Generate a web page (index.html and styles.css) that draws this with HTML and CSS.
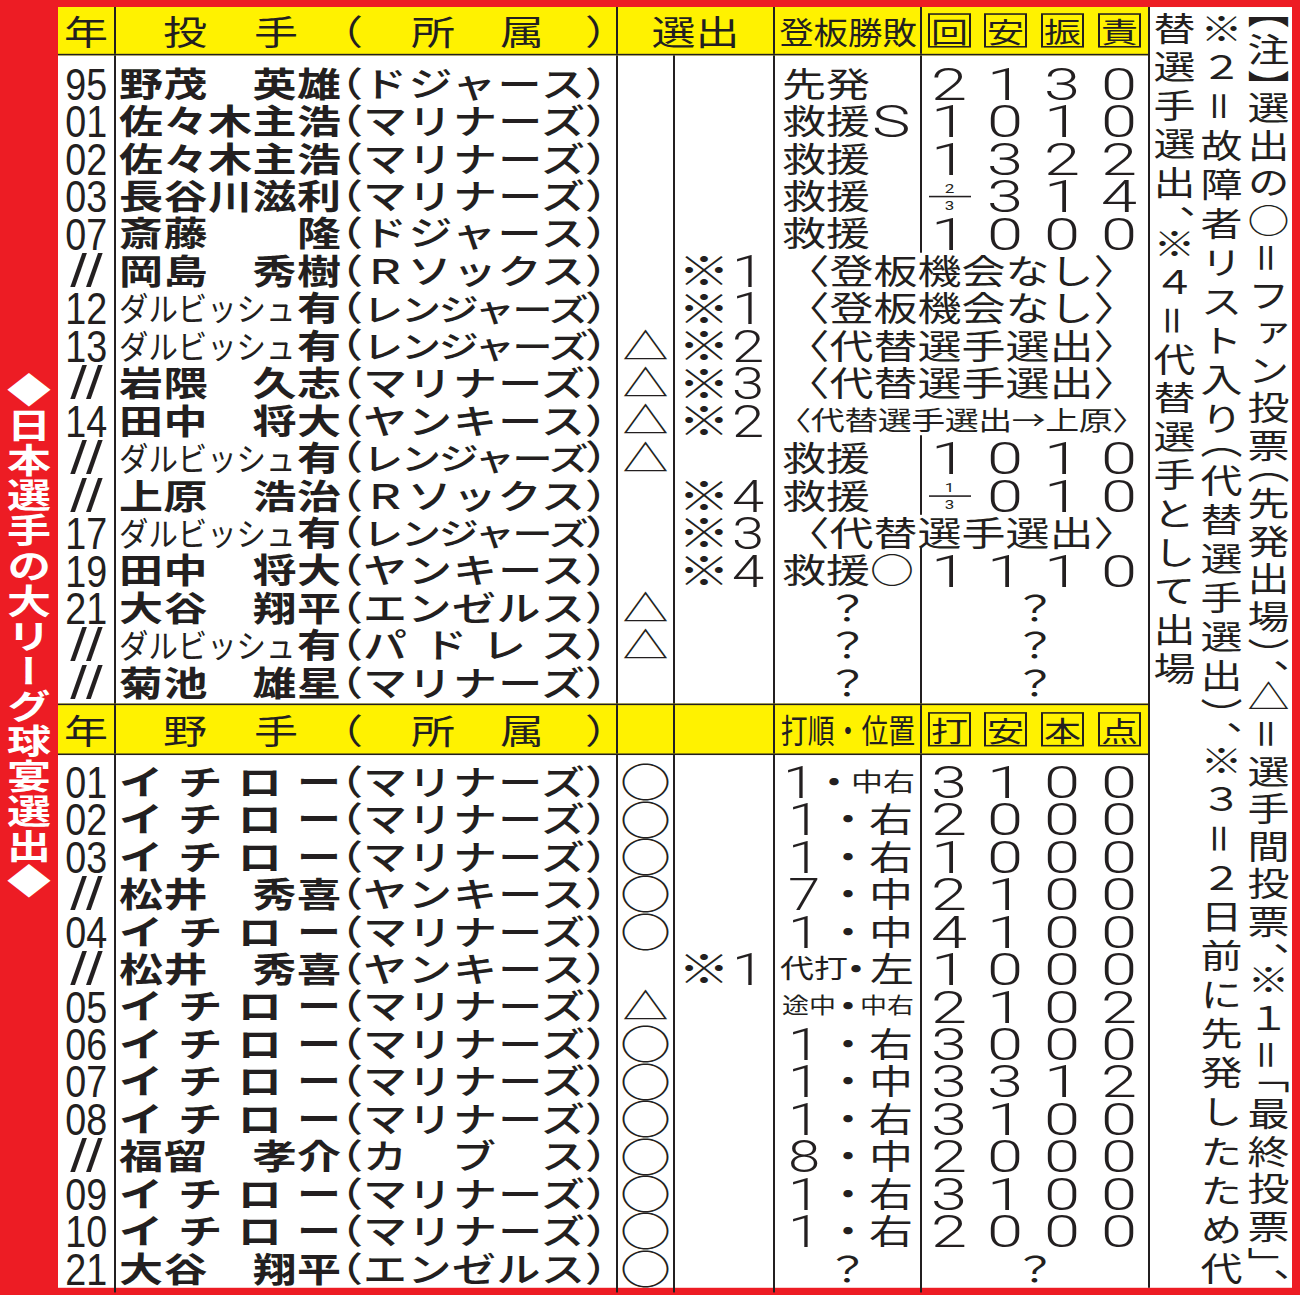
FILE: index.html
```html
<!DOCTYPE html>
<html lang="ja">
<head>
<meta charset="utf-8">
<title>日本選手の大リーグ球宴選出</title>
<link rel="stylesheet" href="styles.css">
</head>
<body>
<div class="frame">
<div class="page">
  <div class="strip"><div class="strip-t">◆日本選手の大リーグ球宴選出◆</div></div>
  <div class="tbl">
    <div class="row hdr">
      <div class="c y">年</div>
      <div class="c n"><span class="nm hn">投手</span><span class="tm"><span class="p">（</span><span class="ti hi">所属</span><span class="p">）</span></span></div>
      <div class="c sel">選出</div>
      <div class="c hc"><span class="hd1">登板勝敗</span></div>
      <div class="c s s1"><span class="bx">回</span></div>
      <div class="c s"><span class="bx">安</span></div>
      <div class="c s"><span class="bx">振</span></div>
      <div class="c s"><span class="bx">責</span></div>
    </div>
    <div class="body b1">
      <div class="row pt7">
        <div class="c y"><span class="yr">95</span></div>
        <div class="c n"><span class="nm">野茂　英雄</span><span class="tm"><span class="p">（</span><span class="ti">ドジャース</span><span class="p">）</span></span></div>
        <div class="c e1"></div><div class="c e2"></div>
        <div class="c t">先発</div>
        <div class="c s s1"><span class="g">2</span></div><div class="c s"><span class="g">1</span></div><div class="c s"><span class="g">3</span></div><div class="c s"><span class="g">0</span></div>
      </div>
      <div class="row">
        <div class="c y"><span class="yr">01</span></div>
        <div class="c n"><span class="nm">佐々木主浩</span><span class="tm"><span class="p">（</span><span class="ti">マリナーズ</span><span class="p">）</span></span></div>
        <div class="c e1"></div><div class="c e2"></div>
        <div class="c t">救援<span class="sv">S</span></div>
        <div class="c s s1"><span class="g">1</span></div><div class="c s"><span class="g">0</span></div><div class="c s"><span class="g">1</span></div><div class="c s"><span class="g">0</span></div>
      </div>
      <div class="row">
        <div class="c y"><span class="yr">02</span></div>
        <div class="c n"><span class="nm">佐々木主浩</span><span class="tm"><span class="p">（</span><span class="ti">マリナーズ</span><span class="p">）</span></span></div>
        <div class="c e1"></div><div class="c e2"></div>
        <div class="c t">救援</div>
        <div class="c s s1"><span class="g">1</span></div><div class="c s"><span class="g">3</span></div><div class="c s"><span class="g">2</span></div><div class="c s"><span class="g">2</span></div>
      </div>
      <div class="row">
        <div class="c y"><span class="yr">03</span></div>
        <div class="c n"><span class="nm">長谷川滋利</span><span class="tm"><span class="p">（</span><span class="ti">マリナーズ</span><span class="p">）</span></span></div>
        <div class="c e1"></div><div class="c e2"></div>
        <div class="c t">救援</div>
        <div class="c s s1"><span class="fr"><b>2</b><i></i><b>3</b></span></div><div class="c s"><span class="g">3</span></div><div class="c s"><span class="g">1</span></div><div class="c s"><span class="g">4</span></div>
      </div>
      <div class="row">
        <div class="c y"><span class="yr">07</span></div>
        <div class="c n"><span class="nm">斎藤　　隆</span><span class="tm"><span class="p">（</span><span class="ti">ドジャース</span><span class="p">）</span></span></div>
        <div class="c e1"></div><div class="c e2"></div>
        <div class="c t">救援</div>
        <div class="c s s1"><span class="g">1</span></div><div class="c s"><span class="g">0</span></div><div class="c s"><span class="g">0</span></div><div class="c s"><span class="g">0</span></div>
      </div>
      <div class="row">
        <div class="c y"><span class="dit">//</span></div>
        <div class="c n"><span class="nm">岡島　秀樹</span><span class="tm"><span class="p">（</span><span class="ti">Ｒソックス</span><span class="p">）</span></span></div>
        <div class="c e1"></div><div class="c e2"><span class="k">※</span><span class="g2">1</span></div>
        <div class="c w">〈登板機会なし〉</div>
      </div>
      <div class="row">
        <div class="c y"><span class="yr">12</span></div>
        <div class="c n"><span class="nm"><span class="dv">ダルビッシュ</span>有</span><span class="tm"><span class="p">（</span><span class="ti"><span class="ren">レンジャーズ</span></span><span class="p">）</span></span></div>
        <div class="c e1"></div><div class="c e2"><span class="k">※</span><span class="g2">1</span></div>
        <div class="c w">〈登板機会なし〉</div>
      </div>
      <div class="row">
        <div class="c y"><span class="yr">13</span></div>
        <div class="c n"><span class="nm"><span class="dv">ダルビッシュ</span>有</span><span class="tm"><span class="p">（</span><span class="ti"><span class="ren">レンジャーズ</span></span><span class="p">）</span></span></div>
        <div class="c e1">△</div><div class="c e2"><span class="k">※</span><span class="g2">2</span></div>
        <div class="c w">〈代替選手選出〉</div>
      </div>
      <div class="row">
        <div class="c y"><span class="dit">//</span></div>
        <div class="c n"><span class="nm">岩隈　久志</span><span class="tm"><span class="p">（</span><span class="ti">マリナーズ</span><span class="p">）</span></span></div>
        <div class="c e1">△</div><div class="c e2"><span class="k">※</span><span class="g2">3</span></div>
        <div class="c w">〈代替選手選出〉</div>
      </div>
      <div class="row">
        <div class="c y"><span class="yr">14</span></div>
        <div class="c n"><span class="nm">田中　将大</span><span class="tm"><span class="p">（</span><span class="ti">ヤンキース</span><span class="p">）</span></span></div>
        <div class="c e1">△</div><div class="c e2"><span class="k">※</span><span class="g2">2</span></div>
        <div class="c w sm">〈代替選手選出→上原〉</div>
      </div>
      <div class="row">
        <div class="c y"><span class="dit">//</span></div>
        <div class="c n"><span class="nm"><span class="dv">ダルビッシュ</span>有</span><span class="tm"><span class="p">（</span><span class="ti"><span class="ren">レンジャーズ</span></span><span class="p">）</span></span></div>
        <div class="c e1">△</div><div class="c e2"></div>
        <div class="c t">救援</div>
        <div class="c s s1"><span class="g">1</span></div><div class="c s"><span class="g">0</span></div><div class="c s"><span class="g">1</span></div><div class="c s"><span class="g">0</span></div>
      </div>
      <div class="row">
        <div class="c y"><span class="dit">//</span></div>
        <div class="c n"><span class="nm">上原　浩治</span><span class="tm"><span class="p">（</span><span class="ti">Ｒソックス</span><span class="p">）</span></span></div>
        <div class="c e1"></div><div class="c e2"><span class="k">※</span><span class="g2">4</span></div>
        <div class="c t">救援</div>
        <div class="c s s1"><span class="fr"><b>1</b><i></i><b>3</b></span></div><div class="c s"><span class="g">0</span></div><div class="c s"><span class="g">1</span></div><div class="c s"><span class="g">0</span></div>
      </div>
      <div class="row">
        <div class="c y"><span class="yr">17</span></div>
        <div class="c n"><span class="nm"><span class="dv">ダルビッシュ</span>有</span><span class="tm"><span class="p">（</span><span class="ti"><span class="ren">レンジャーズ</span></span><span class="p">）</span></span></div>
        <div class="c e1"></div><div class="c e2"><span class="k">※</span><span class="g2">3</span></div>
        <div class="c w">〈代替選手選出〉</div>
      </div>
      <div class="row">
        <div class="c y"><span class="yr">19</span></div>
        <div class="c n"><span class="nm">田中　将大</span><span class="tm"><span class="p">（</span><span class="ti">ヤンキース</span><span class="p">）</span></span></div>
        <div class="c e1"></div><div class="c e2"><span class="k">※</span><span class="g2">4</span></div>
        <div class="c t">救援○</div>
        <div class="c s s1"><span class="g">1</span></div><div class="c s"><span class="g">1</span></div><div class="c s"><span class="g">1</span></div><div class="c s"><span class="g">0</span></div>
      </div>
      <div class="row">
        <div class="c y"><span class="yr">21</span></div>
        <div class="c n"><span class="nm">大谷　翔平</span><span class="tm"><span class="p">（</span><span class="ti">エンゼルス</span><span class="p">）</span></span></div>
        <div class="c e1">△</div><div class="c e2"></div>
        <div class="c dq">？</div>
        <div class="c q4">？</div>
      </div>
      <div class="row">
        <div class="c y"><span class="dit">//</span></div>
        <div class="c n"><span class="nm"><span class="dv">ダルビッシュ</span>有</span><span class="tm"><span class="p">（</span><span class="ti">パドレス</span><span class="p">）</span></span></div>
        <div class="c e1">△</div><div class="c e2"></div>
        <div class="c dq">？</div>
        <div class="c q4">？</div>
      </div>
      <div class="row pb8">
        <div class="c y"><span class="dit">//</span></div>
        <div class="c n"><span class="nm">菊池　雄星</span><span class="tm"><span class="p">（</span><span class="ti">マリナーズ</span><span class="p">）</span></span></div>
        <div class="c e1"></div><div class="c e2"></div>
        <div class="c dq">？</div>
        <div class="c q4">？</div>
      </div>
    </div>
    <div class="row hdr h2">
      <div class="c y">年</div>
      <div class="c n"><span class="nm hn">野手</span><span class="tm"><span class="p">（</span><span class="ti hi">所属</span><span class="p">）</span></span></div>
      <div class="c e1"></div><div class="c e2"></div>
      <div class="c hc"><span class="hd2">打順・位置</span></div>
      <div class="c s s1"><span class="bx">打</span></div>
      <div class="c s"><span class="bx">安</span></div>
      <div class="c s"><span class="bx">本</span></div>
      <div class="c s"><span class="bx">点</span></div>
    </div>
    <div class="body b2">
      <div class="row pt5">
        <div class="c y"><span class="yr">01</span></div>
        <div class="c n"><span class="nm">イチロー</span><span class="tm"><span class="p">（</span><span class="ti">マリナーズ</span><span class="p">）</span></span></div>
        <div class="c e1 ci">○</div><div class="c e2"></div>
        <div class="c d"><span class="o o1">1</span><span class="dt dt1">・</span><span class="ps ps1">中右</span></div>
        <div class="c s s1"><span class="g">3</span></div><div class="c s"><span class="g">1</span></div><div class="c s"><span class="g">0</span></div><div class="c s"><span class="g">0</span></div>
      </div>
      <div class="row">
        <div class="c y"><span class="yr">02</span></div>
        <div class="c n"><span class="nm">イチロー</span><span class="tm"><span class="p">（</span><span class="ti">マリナーズ</span><span class="p">）</span></span></div>
        <div class="c e1 ci">○</div><div class="c e2"></div>
        <div class="c d"><span class="o">1</span><span class="dt">・</span><span class="ps">右</span></div>
        <div class="c s s1"><span class="g">2</span></div><div class="c s"><span class="g">0</span></div><div class="c s"><span class="g">0</span></div><div class="c s"><span class="g">0</span></div>
      </div>
      <div class="row">
        <div class="c y"><span class="yr">03</span></div>
        <div class="c n"><span class="nm">イチロー</span><span class="tm"><span class="p">（</span><span class="ti">マリナーズ</span><span class="p">）</span></span></div>
        <div class="c e1 ci">○</div><div class="c e2"></div>
        <div class="c d"><span class="o">1</span><span class="dt">・</span><span class="ps">右</span></div>
        <div class="c s s1"><span class="g">1</span></div><div class="c s"><span class="g">0</span></div><div class="c s"><span class="g">0</span></div><div class="c s"><span class="g">0</span></div>
      </div>
      <div class="row">
        <div class="c y"><span class="dit">//</span></div>
        <div class="c n"><span class="nm">松井　秀喜</span><span class="tm"><span class="p">（</span><span class="ti">ヤンキース</span><span class="p">）</span></span></div>
        <div class="c e1 ci">○</div><div class="c e2"></div>
        <div class="c d"><span class="o">7</span><span class="dt">・</span><span class="ps">中</span></div>
        <div class="c s s1"><span class="g">2</span></div><div class="c s"><span class="g">1</span></div><div class="c s"><span class="g">0</span></div><div class="c s"><span class="g">0</span></div>
      </div>
      <div class="row">
        <div class="c y"><span class="yr">04</span></div>
        <div class="c n"><span class="nm">イチロー</span><span class="tm"><span class="p">（</span><span class="ti">マリナーズ</span><span class="p">）</span></span></div>
        <div class="c e1 ci">○</div><div class="c e2"></div>
        <div class="c d"><span class="o">1</span><span class="dt">・</span><span class="ps">中</span></div>
        <div class="c s s1"><span class="g">4</span></div><div class="c s"><span class="g">1</span></div><div class="c s"><span class="g">0</span></div><div class="c s"><span class="g">0</span></div>
      </div>
      <div class="row">
        <div class="c y"><span class="dit">//</span></div>
        <div class="c n"><span class="nm">松井　秀喜</span><span class="tm"><span class="p">（</span><span class="ti">ヤンキース</span><span class="p">）</span></span></div>
        <div class="c e1"></div><div class="c e2"><span class="k">※</span><span class="g2">1</span></div>
        <div class="c d"><span class="sm1">代打</span><span class="dt dt3">・</span><span class="ps">左</span></div>
        <div class="c s s1"><span class="g">1</span></div><div class="c s"><span class="g">0</span></div><div class="c s"><span class="g">0</span></div><div class="c s"><span class="g">0</span></div>
      </div>
      <div class="row">
        <div class="c y"><span class="yr">05</span></div>
        <div class="c n"><span class="nm">イチロー</span><span class="tm"><span class="p">（</span><span class="ti">マリナーズ</span><span class="p">）</span></span></div>
        <div class="c e1">△</div><div class="c e2"></div>
        <div class="c d"><span class="sm2 f">途中</span><span class="dt dt4">・</span><span class="sm2">中右</span></div>
        <div class="c s s1"><span class="g">2</span></div><div class="c s"><span class="g">1</span></div><div class="c s"><span class="g">0</span></div><div class="c s"><span class="g">2</span></div>
      </div>
      <div class="row">
        <div class="c y"><span class="yr">06</span></div>
        <div class="c n"><span class="nm">イチロー</span><span class="tm"><span class="p">（</span><span class="ti">マリナーズ</span><span class="p">）</span></span></div>
        <div class="c e1 ci">○</div><div class="c e2"></div>
        <div class="c d"><span class="o">1</span><span class="dt">・</span><span class="ps">右</span></div>
        <div class="c s s1"><span class="g">3</span></div><div class="c s"><span class="g">0</span></div><div class="c s"><span class="g">0</span></div><div class="c s"><span class="g">0</span></div>
      </div>
      <div class="row">
        <div class="c y"><span class="yr">07</span></div>
        <div class="c n"><span class="nm">イチロー</span><span class="tm"><span class="p">（</span><span class="ti">マリナーズ</span><span class="p">）</span></span></div>
        <div class="c e1 ci">○</div><div class="c e2"></div>
        <div class="c d"><span class="o">1</span><span class="dt">・</span><span class="ps">中</span></div>
        <div class="c s s1"><span class="g">3</span></div><div class="c s"><span class="g">3</span></div><div class="c s"><span class="g">1</span></div><div class="c s"><span class="g">2</span></div>
      </div>
      <div class="row">
        <div class="c y"><span class="yr">08</span></div>
        <div class="c n"><span class="nm">イチロー</span><span class="tm"><span class="p">（</span><span class="ti">マリナーズ</span><span class="p">）</span></span></div>
        <div class="c e1 ci">○</div><div class="c e2"></div>
        <div class="c d"><span class="o">1</span><span class="dt">・</span><span class="ps">右</span></div>
        <div class="c s s1"><span class="g">3</span></div><div class="c s"><span class="g">1</span></div><div class="c s"><span class="g">0</span></div><div class="c s"><span class="g">0</span></div>
      </div>
      <div class="row">
        <div class="c y"><span class="dit">//</span></div>
        <div class="c n"><span class="nm">福留　孝介</span><span class="tm"><span class="p">（</span><span class="ti">カブス</span><span class="p">）</span></span></div>
        <div class="c e1 ci">○</div><div class="c e2"></div>
        <div class="c d"><span class="o">8</span><span class="dt">・</span><span class="ps">中</span></div>
        <div class="c s s1"><span class="g">2</span></div><div class="c s"><span class="g">0</span></div><div class="c s"><span class="g">0</span></div><div class="c s"><span class="g">0</span></div>
      </div>
      <div class="row">
        <div class="c y"><span class="yr">09</span></div>
        <div class="c n"><span class="nm">イチロー</span><span class="tm"><span class="p">（</span><span class="ti">マリナーズ</span><span class="p">）</span></span></div>
        <div class="c e1 ci">○</div><div class="c e2"></div>
        <div class="c d"><span class="o">1</span><span class="dt">・</span><span class="ps">右</span></div>
        <div class="c s s1"><span class="g">3</span></div><div class="c s"><span class="g">1</span></div><div class="c s"><span class="g">0</span></div><div class="c s"><span class="g">0</span></div>
      </div>
      <div class="row">
        <div class="c y"><span class="yr">10</span></div>
        <div class="c n"><span class="nm">イチロー</span><span class="tm"><span class="p">（</span><span class="ti">マリナーズ</span><span class="p">）</span></span></div>
        <div class="c e1 ci">○</div><div class="c e2"></div>
        <div class="c d"><span class="o">1</span><span class="dt">・</span><span class="ps">右</span></div>
        <div class="c s s1"><span class="g">2</span></div><div class="c s"><span class="g">0</span></div><div class="c s"><span class="g">0</span></div><div class="c s"><span class="g">0</span></div>
      </div>
      <div class="row pb6">
        <div class="c y"><span class="yr">21</span></div>
        <div class="c n"><span class="nm">大谷　翔平</span><span class="tm"><span class="p">（</span><span class="ti">エンゼルス</span><span class="p">）</span></span></div>
        <div class="c e1 ci">○</div><div class="c e2"></div>
        <div class="c dq">？</div>
        <div class="c q4">？</div>
      </div>
    </div>
  </div>
  <div class="notes">
    <div class="nl j"><span class="h">【</span>注<span class="h">】</span>選出の○<span class="h">＝</span>ファン投票<span class="h">（</span>先発出場<span class="h">）、</span>△<span class="h">＝</span>選手間投票<span class="h">、</span>※１<span class="h">＝「</span>最終投票<span class="h">」、</span></div>
    <div class="nl j">※２<span class="h">＝</span>故障者リスト入り<span class="h">（</span>代替選手選出<span class="h">）、</span>※３<span class="h">＝</span>２日前に先発したため代</div>
    <div class="nl l3">替選手選出<span class="h">、</span>※４<span class="h">＝</span>代替選手として出場</div>
  </div>
</div>
</div>
</body>
</html>
```

FILE: styles.css
```css
* { box-sizing: border-box; }
html, body { margin: 0; padding: 0; background: #ed1c24; overflow: hidden; }
body { width: 1300px; height: 1295px; }

.frame { width: 1300px; height: 1295px; overflow: hidden; }

.page {
  width: 1300px;
  height: 1660px;
  padding: 9px 8px 9px 0;
  display: flex;
  transform: scaleY(0.78);
  transform-origin: 0 0;
  background: #ed1c24;
  color: #231f20;
  font-family: "Noto Sans CJK JP", "Noto Sans CJK SC", sans-serif;
}

/* left red strip */
.strip { flex: 0 0 58px; display: flex; align-items: center; justify-content: center; padding-bottom: 30px; }
.strip-t { writing-mode: vertical-rl; color: #fff; font-weight: 700; font-size: 44px; line-height: 50px; letter-spacing: 1px; white-space: nowrap; }

/* main table */
.tbl { flex: 0 0 1090px; background: #fff; display: flex; flex-direction: column; }
.body { flex: none; }
.b1 { height: 831px; }
.b2 { height: 683px; }

.row {
  display: grid;
  grid-template-columns: 56px 502px 57px 100px 147px 57px 57px 57px 57px;
  height: 48px;
  font-size: 44px;
  line-height: 48px;
}
.hdr { height: 62px; background: #fff200; border-bottom: 2px solid #231f20; }
.h2 { height: 66px; border-top: 2px solid #231f20; }
.pt7 { height: 55px; }
.pt7 > .c { padding-top: 7px; }
.pb8 { height: 56px; }
.pb8 > .c { padding-bottom: 8px; }
.pt5 { height: 53px; }
.pt5 > .c { padding-top: 5px; }
.pb6 { height: 54px; }
.pb6 > .c { padding-bottom: 6px; }

.c { display: flex; align-items: center; border-left: 2px solid #231f20; white-space: nowrap; min-width: 0; }
.y { border-left: 0; justify-content: center; }
.n { padding-left: 3px; }
.nm { flex: 0 0 222px; white-space: normal; text-align: justify; text-align-last: justify; font-weight: 700; }
.hdr .nm { font-weight: 400; }
.hn { padding: 0 43px 0 44px; }
.tm { display: flex; flex: 0 0 266px; font-weight: 500; }
.hdr .tm { font-weight: 400; }
.p { flex: none; font-feature-settings: "halt"; }
.ti { flex: 0 0 222px; white-space: normal; text-align: justify; text-align-last: justify; }
.hi { padding: 0 41px 0 48px; }
.dv {
  display: inline-block;
  white-space: nowrap;
  font-weight: 400;
  font-size: 42px;
  transform: scaleX(0.7);
  transform-origin: 0 50%;
  margin-right: -76px;
}
.ren { font-size: 40px; letter-spacing: -3.5px; }

.sel { grid-column: span 2; justify-content: center; }
.hc { justify-content: center; }
.hd1 { display: inline-block; font-size: 40px; transform: scaleX(0.86); }
.hd2 { display: inline-block; font-size: 42px; transform: scaleX(0.64); }
.s { border-left: 0; justify-content: center; }
.s1 { border-left: 2px solid #231f20; }
.bx {
  display: flex; align-items: center; justify-content: center;
  width: 43px; height: 44px;
  border: 2px solid #231f20;
  font-size: 37px; line-height: 1;
}

.e1 { justify-content: center; font-size: 46px; }
.ci { font-size: 51px; }
.e2 { padding-left: 3px; }
.k { font-size: 52px; }
.g2 { font-family: Roboto, "Liberation Sans", Arial, sans-serif; font-weight: 300; font-size: 58px; margin: 6px 0 0 2px; }
.t { padding-left: 7px; }
.sv { display: inline-block; font-family: Roboto, "Liberation Sans", Arial, sans-serif; font-weight: 300; font-size: 58px; margin: 6px 0 0 4px; transform: scaleX(1.12); }
.dq { justify-content: center; }
.w { grid-column: span 5; justify-content: center; }
.sm { font-size: 34px; letter-spacing: -0.5px; }
.q4 { grid-column: span 4; justify-content: center; }

.yr { font-family: "Liberation Sans", Arial, sans-serif; font-size: 58px; transform: scaleX(0.65); margin-top: 6px; }
.dit { font-family: "Liberation Sans", Arial, sans-serif; font-weight: 400; font-size: 60px; letter-spacing: -1px; margin-top: 6px; }
.g { font-family: Roboto, "Liberation Sans", Arial, sans-serif; font-weight: 300; font-size: 58px; transform: scaleX(1.12); margin-top: 6px; }

.fr { display: flex; flex-direction: column; align-items: center; font-family: Roboto, "Liberation Sans", Arial, sans-serif; font-size: 17px; line-height: 20px; margin-top: 6px; }
.fr b { font-weight: 400; }
.fr i { display: block; width: 42px; height: 2px; background: #231f20; margin: 0; }

/* batting order column */
.d > * { min-width: 0; flex-shrink: 0; }
.o { flex: 0 0 58px; display: flex; justify-content: center; font-family: Roboto, "Liberation Sans", Arial, sans-serif; font-weight: 300; font-size: 58px; margin-top: 6px; }
.o1 { flex-basis: 48px; }
.dt { flex: 0 0 30px; display: flex; justify-content: center; }
.dt1 { flex-basis: 22px; }
.dt3 { flex-basis: 16px; }
.dt4 { flex-basis: 24px; }
.ps { flex: 0 0 50px; display: flex; justify-content: flex-end; }
.ps1 { flex-basis: 70px; font-size: 32px; }
.sm1 { font-size: 34px; margin-left: 5px; }
.sm2 { font-size: 27px; }
.f { margin-left: 7px; }

/* notes column */
.notes {
  flex: 0 0 144px;
  background: #fff;
  border-left: 2px solid #231f20;
  writing-mode: vertical-rl;
  padding: 6px 0 4px;
  font-size: 42px;
  line-height: 47px;
}
.nl { white-space: normal; }
.j { text-align: justify; text-align-last: justify; }
.l3 { letter-spacing: 7.5px; }
.h { font-feature-settings: "vhal"; }
```
